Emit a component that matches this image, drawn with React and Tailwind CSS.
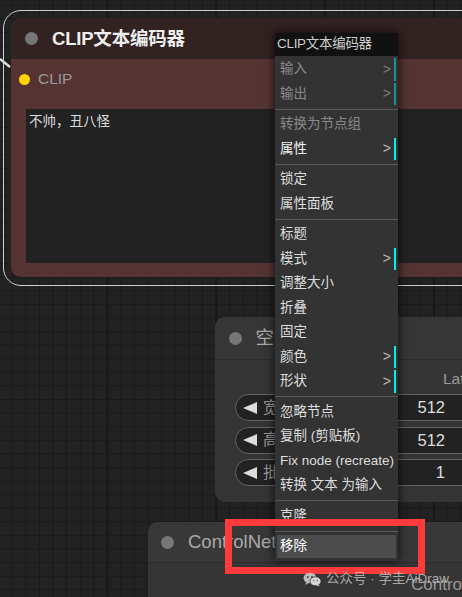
const menuItems = [
  { t: "输入", sub: true, dis: true },
  { t: "输出", sub: true, dis: true },
  "sep",
  { t: "转换为节点组", dis: true },
  { t: "属性", sub: true, bright: true },
  "sep",
  { t: "锁定" },
  { t: "属性面板" },
  "sep",
  { t: "标题" },
  { t: "模式", sub: true },
  { t: "调整大小" },
  { t: "折叠" },
  { t: "固定" },
  { t: "颜色", sub: true },
  { t: "形状", sub: true },
  "sep",
  { t: "忽略节点" },
  { t: "复制 (剪贴板)" },
  { t: "Fix node (recreate)" },
  { t: "转换 文本 为输入" },
  "sep",
  { t: "克隆" },
  "sep",
  { t: "移除", hl: true },
];

const Dot = ({ color = "bg-[#777]", size = "w-[13px] h-[13px]" }) => (
  <span className={`${size} ${color} rounded-full shrink-0`} />
);

const LeftArrow = () => (
  <svg width="14" height="12" viewBox="0 0 14 12" className="shrink-0">
    <polygon points="0,6 14,0 14,12" fill="#ddd" />
  </svg>
);

const Pill = ({ label, value }) => (
  <div className="flex items-center h-[27px] w-[265px] rounded-full border border-[#666] bg-[#222] pl-[7px] pr-[18px]">
    <LeftArrow />
    <span className="ml-[6px] text-[16px] text-[#999]">{label}</span>
    <span className="flex-1" />
    <span className="text-[16.5px] text-[#ddd]">{value}</span>
    <span className="ml-[22px] w-[14px] text-[13px] text-[#ddd]">▶</span>
  </div>
);

const ContextMenu = () => (
  <div className="absolute left-[275px] top-[33px] w-[123px] bg-[#333] shadow-[0_0_10px_rgba(0,0,0,0.8)] pb-px">
    <div className="h-[23px] bg-[#111] pl-[2px] flex items-center text-[13.5px] text-[#ccc] tracking-[-0.3px]">
      CLIP文本编码器
    </div>
    {menuItems.map((it, i) =>
      it === "sep" ? (
        <div key={i} className="my-[2px] h-[4px] flex items-center">
          <div className="h-px w-full bg-[#585858]" />
        </div>
      ) : (
        <div
          key={i}
          className={`m-[2px] h-[22.5px] pl-[3px] flex items-center text-[13.5px] whitespace-nowrap ${
            it.dis ? "opacity-50" : ""
          } ${it.sub ? "border-r-2 border-[#00f0f0] pr-[3px]" : ""} ${
            it.hl ? "bg-[#4c4c4c] text-white" : it.bright ? "text-[#f2f2f2]" : "text-[#ddd]"
          }`}
        >
          <span className="flex-1">{it.t}</span>
          {it.sub && <span className="text-[14px] text-[#bbb]">&gt;</span>}
        </div>
      )
    )}
  </div>
);

const WeChatIcon = () => (
  <svg width="19" height="15" viewBox="0 0 19 15" className="shrink-0">
    <ellipse cx="7" cy="6" rx="6.5" ry="5.3" fill="#bdbdbd" />
    <path d="M3 10.5 L2.5 13 L5.5 11 Z" fill="#bdbdbd" />
    <ellipse cx="12.5" cy="9.3" rx="5.5" ry="4.5" fill="#d6d6d6" stroke="#333" strokeWidth="0.8" />
    <path d="M15.5 12.8 L16.5 14.6 L13.5 13.4 Z" fill="#d6d6d6" />
    <circle cx="4.8" cy="5" r="0.9" fill="#333" />
    <circle cx="9" cy="5" r="0.9" fill="#333" />
    <circle cx="10.8" cy="8.6" r="0.7" fill="#555" />
    <circle cx="14.3" cy="8.6" r="0.7" fill="#555" />
  </svg>
);

export default function App() {
  return (
    <div className="relative w-[462px] h-[597px] overflow-hidden bg-[#222] font-['Liberation_Sans','Noto_Sans_CJK_SC',sans-serif] bg-[image:linear-gradient(to_right,#1a1a1a_1px,transparent_1px),linear-gradient(to_bottom,#1a1a1a_1px,transparent_1px),linear-gradient(to_right,#161616_2px,transparent_2px)] bg-[size:13.6px_13.6px,13.6px_13.6px,108.8px_100%] bg-[position:11.7px_4.8px,11.7px_4.8px,106.5px_0]">
      {/* link coming into CLIP input */}
      <svg className="absolute left-0 top-0" width="20" height="80">
        <line x1="0" y1="59" x2="10" y2="67" stroke="#ddd" strokeWidth="2.5" />
      </svg>

      {/* selected outline */}
      <div className="absolute left-[3px] top-[10px] w-[520px] h-[276px] rounded-[18px] border-[1.5px] border-[#cfcfcf]" />

      {/* CLIP text encoder node */}
      <div className="absolute left-[11px] top-[18px] w-[500px] h-[259px] rounded-[10px] bg-[#553333] overflow-hidden flex flex-col">
        <div className="h-[41px] bg-[#332222] flex items-center pl-[13.5px] shrink-0">
          <Dot />
          <span className="ml-[14.5px] text-[18.5px] font-bold text-[#eee] tracking-[-0.2px]">CLIP文本编码器</span>
        </div>
        <div className="h-[40px] flex items-center pl-[8px] shrink-0">
          <Dot color="bg-[#ffd500]" size="w-[11px] h-[11px]" />
          <span className="ml-[8px] text-[15.5px] text-[#999]">CLIP</span>
          <span className="ml-[400px] text-[15.5px] text-[#999]">条件</span>
        </div>
        <div className="ml-[15px] mt-[10px] h-[154px] bg-[#222] pl-[3px] pt-[3px] text-[13.5px] text-[#ddd]">
          不帅，丑八怪
        </div>
      </div>

      {/* Empty latent node */}
      <div className="absolute left-[215px] top-[317px] w-[305px] h-[185px] rounded-[10px] bg-[#353535] overflow-hidden flex flex-col">
        <div className="h-[43px] bg-[#363636] border-b border-[#2c2c2c] flex items-center pl-[13.5px] shrink-0">
          <Dot />
          <span className="ml-[14px] text-[18.5px] text-[#aaa]">空Latent图像</span>
        </div>
        <div className="h-[22px] mt-[8px] pl-[228px] flex items-center text-[15.5px] text-[#999]">
          Latent
        </div>
        <div className="mt-[4px] pl-[20px] flex flex-col gap-[5.5px]">
          <Pill label="宽度" value="512" />
          <Pill label="高度" value="512" />
          <Pill label="批次大小" value="1" />
        </div>
      </div>

      {/* ControlNet node */}
      <div className="absolute left-[148px] top-[522px] w-[400px] h-[100px] rounded-[10px] bg-[#353535] overflow-hidden flex flex-col">
        <div className="h-[41px] bg-[#383838] border-b border-[#2c2c2c] flex items-center pl-[12.5px] shrink-0">
          <Dot />
          <span className="ml-[14.5px] text-[18.5px] text-[#aaa]">ControlNet加载器</span>
        </div>
        <div className="h-[22px] mt-[11px] pl-[263px] flex items-center text-[17px] text-[#999]">
          ControlNet
        </div>
      </div>

      <ContextMenu />

      {/* annotation */}
      <div className="absolute left-[225px] top-[519px] w-[200px] h-[55px] border-[7px] border-[#ff3b3b]" />

      {/* watermark */}
      <div className="absolute left-[303px] top-[569px] flex items-center gap-[4px] text-[13.5px] text-[#c8c8c8]/80">
        <WeChatIcon />
        <span>公众号 · 学圭AiDraw</span>
      </div>
    </div>
  );
}
